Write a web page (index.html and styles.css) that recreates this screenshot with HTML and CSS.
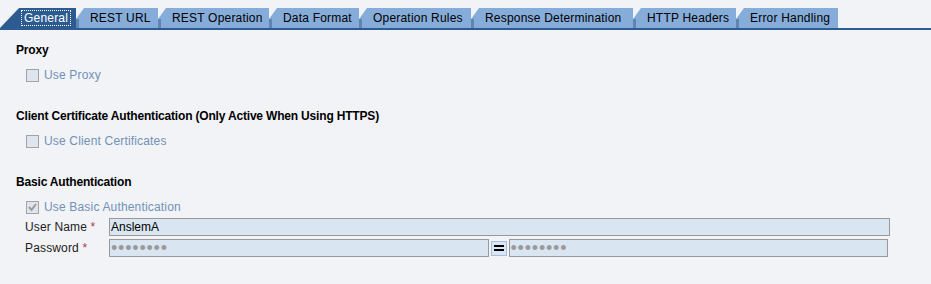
FILE: index.html
```html
<!DOCTYPE html>
<html lang="en">

<head>
    <meta charset="UTF-8">
    <meta name="viewport" content="width=device-width, initial-scale=1.0">
    <title>REST Channel - General</title>
    <link rel="stylesheet" href="styles.css">
</head>

<body>
    <div class="tabstrip">
        <div class="tab tab-active"><span class="tab-focus">General</span></div>
        <div class="tab">REST URL</div>
        <div class="tab">REST Operation</div>
        <div class="tab">Data Format</div>
        <div class="tab">Operation Rules</div>
        <div class="tab">Response Determination</div>
        <div class="tab">HTTP Headers</div>
        <div class="tab">Error Handling</div>
    </div>

    <div class="contenido">
        <div class="grupo">
            <div class="grupo-titulo">Proxy</div>
            <div class="check">
                <span class="check-box"></span>
                <span>Use Proxy</span>
            </div>
        </div>

        <div class="grupo">
            <div class="grupo-titulo">Client Certificate Authentication (Only Active When Using HTTPS)</div>
            <div class="check">
                <span class="check-box"></span>
                <span>Use Client Certificates</span>
            </div>
        </div>

        <div class="grupo">
            <div class="grupo-titulo">Basic Authentication</div>
            <div class="check">
                <span class="check-box">
                    <svg width="11" height="11" viewBox="0 0 11 11">
                        <polyline points="2,5 4.5,8 9,2" fill="none" stroke="#9a9a9a" stroke-width="2" />
                    </svg>
                </span>
                <span>Use Basic Authentication</span>
            </div>

            <div class="fila">
                <div class="etiqueta">User Name <span class="obligatorio">*</span></div>
                <div class="campo">AnslemA</div>
            </div>
            <div class="fila">
                <div class="etiqueta">Password <span class="obligatorio">*</span></div>
                <div class="clave">
                    <div class="campo"><span class="puntos">••••••••</span></div>
                    <div class="btn-igual">
                        <svg width="10" height="6" viewBox="0 0 10 6">
                            <rect x="0" y="0" width="10" height="2" fill="#000" />
                            <rect x="0" y="4" width="10" height="2" fill="#000" />
                        </svg>
                    </div>
                    <div class="campo"><span class="puntos">••••••••</span></div>
                </div>
            </div>
        </div>
    </div>
</body>

</html>
```

FILE: styles.css
```css
body {
    font-family: "Liberation Sans", Arial, sans-serif;
    font-size: 12px;
    background-color: #f2f3f7;
    color: #000;
    margin: 0;
    padding: 8px 0 0 0;
}

/* pestañas */
.tabstrip {
    display: flex;
    border-bottom: 2px solid #2c5c92;
}

.tab {
    box-sizing: border-box;
    height: 20px;
    line-height: 20px;
    padding: 0 0 0 14px;
    color: #000;
    background: linear-gradient(#5f86b2, #5f86b2) left bottom / 3px 9px no-repeat, #86acd9;
    clip-path: polygon(0 100%, 0 55%, 8px 0, 100% 0, 100% 100%);
    white-space: nowrap;
    letter-spacing: 0.2px;
}

.tab:nth-child(2) { width: 82px; }
.tab:nth-child(3) { width: 111px; }
.tab:nth-child(4) { width: 90px; }
.tab:nth-child(5) { width: 112px; }
.tab:nth-child(6) { width: 162px; }
.tab:nth-child(7) { width: 103px; }
.tab:nth-child(8) { width: 102px; }

.tab-active {
    width: 76px;
    padding-left: 21px;
    background: #2b5b90;
    color: #fff;
    clip-path: polygon(0 100%, 19px 0, 100% 0, 100% 100%);
    display: flex;
    align-items: center;
}

.tab-focus {
    display: inline-block;
    line-height: 14px;
    padding: 0 2px;
    border: 1px dotted #fff;
}

/* contenido */
.contenido {
    padding: 12px 16px 0 16px;
}

.grupo {
    margin-bottom: 25px;
}

.grupo-titulo {
    font-weight: bold;
    line-height: 16px;
    letter-spacing: -0.18px;
}

.check {
    display: flex;
    align-items: center;
    gap: 5px;
    margin-top: 9px;
    padding-left: 10px;
    line-height: 16px;
    color: #7191b6;
    letter-spacing: 0.17px;
}

.check-box {
    width: 13px;
    height: 13px;
    box-sizing: border-box;
    border: 1px solid #a3a3a3;
    background-color: #dfe5ee;
    display: flex;
    align-items: center;
    justify-content: center;
}

.fila {
    display: flex;
    align-items: center;
    margin-top: 3px;
    padding-left: 9px;
    width: 865px;
}

.etiqueta {
    width: 84px;
    flex-shrink: 0;
    color: #222;
    letter-spacing: 0.15px;
}

.obligatorio {
    color: #b3344e;
}

.campo {
    flex: 1;
    height: 18px;
    line-height: 16px;
    box-sizing: border-box;
    border: 1px solid #999;
    background-color: #dae5f2;
    padding-left: 1px;
    overflow: hidden;
}

.clave {
    flex: 1;
    display: grid;
    grid-template-columns: 1fr 16px 1fr;
    gap: 2px;
    align-items: center;
    margin-right: 2px;
}

.puntos {
    display: block;
    color: #9a9a9a;
    font-size: 18px;
    line-height: 16px;
    letter-spacing: 0.8px;
}

.btn-igual {
    height: 15px;
    box-sizing: border-box;
    border: 1px solid #a6bcd9;
    background-color: #d8e6f5;
    display: flex;
    align-items: center;
    justify-content: center;
}
```
